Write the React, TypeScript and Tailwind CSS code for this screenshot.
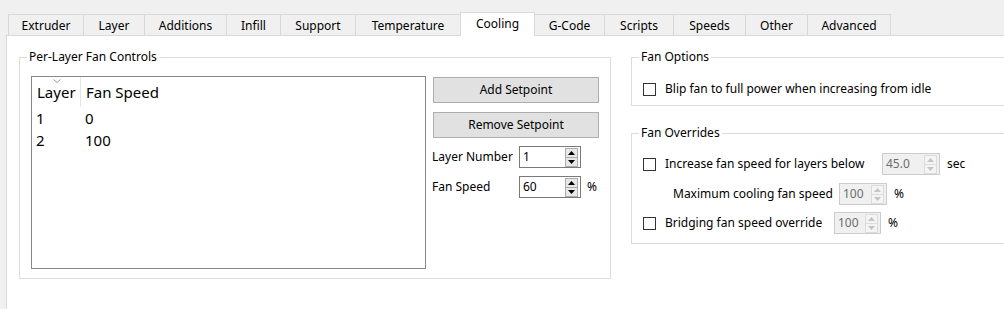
import React from "react";

const tabs: { label: string; w: string; active?: boolean }[] = [
  { label: "Extruder", w: "w-[76px]" },
  { label: "Layer", w: "w-[62px]" },
  { label: "Additions", w: "w-[83px]" },
  { label: "Infill", w: "w-[55px]" },
  { label: "Support", w: "w-[76px]" },
  { label: "Temperature", w: "w-[106px]" },
  { label: "Cooling", w: "w-[75px]", active: true },
  { label: "G-Code", w: "w-[71px]" },
  { label: "Scripts", w: "w-[70px]" },
  { label: "Speeds", w: "w-[73px]" },
  { label: "Other", w: "w-[63px]" },
  { label: "Advanced", w: "w-[84px]" },
];

function Arrows({ disabled }: { disabled?: boolean }) {
  const c = disabled ? "#c4c4c4" : "#000";
  return (
    <div className={`mr-[2px] flex h-[19px] w-[13px] flex-col border ${disabled ? "border-[#dcdcdc] bg-[#f4f4f4]" : "border-[#adadad] bg-[#e8e8e8]"}`}>
      <div className="flex flex-1 items-center justify-center">
        <svg width="7" height="4" viewBox="0 0 7 4"><path d="M3.5 0 L7 4 L0 4 Z" fill={c} /></svg>
      </div>
      <div className={`h-px ${disabled ? "bg-[#dcdcdc]" : "bg-[#adadad]"}`} />
      <div className="flex flex-1 items-center justify-center">
        <svg width="7" height="4" viewBox="0 0 7 4"><path d="M0 0 L7 0 L3.5 4 Z" fill={c} /></svg>
      </div>
    </div>
  );
}

function Spin({ value, w, disabled }: { value: string; w: string; disabled?: boolean }) {
  return (
    <div className={`flex h-[22px] ${w} items-center border ${disabled ? "border-[#cccccc] bg-[#f0f0f0] text-[#6d6d6d]" : "border-[#7a7a7a] bg-white text-black"}`}>
      <span className="flex-1 pl-[3px]">{value}</span>
      <Arrows disabled={disabled} />
    </div>
  );
}

function Check() {
  return <div className="h-[13px] w-[13px] shrink-0 border border-[#333333] bg-white" />;
}

function Group({ title, className, children }: { title: string; className: string; children: React.ReactNode }) {
  return (
    <div className={`relative border border-[#dcdcdc] ${className}`}>
      <span className="absolute left-[7px] -top-[9px] bg-white px-[2px] leading-[16px]">{title}</span>
      {children}
    </div>
  );
}

export default function App() {
  return (
    <div className="h-[309px] w-[1004px] overflow-hidden bg-[#f0f0f0] font-['Segoe_UI','Noto_Sans',sans-serif] text-[12px] text-black">
      {/* Tabs */}
      <div className="flex h-[35px] items-end pl-[8px]">
        {tabs.map((t) => (
          <div
            key={t.label}
            className={`-ml-px flex shrink-0 items-center justify-center border border-b-0 border-[#d9d9d9] first:ml-0 ${t.w} ${
              t.active ? "relative z-10 -mb-px h-[24px] bg-white pb-px" : "h-[21px] bg-[#f0f0f0] pt-px"
            }`}
          >
            {t.label}
          </div>
        ))}
      </div>

      {/* Pane */}
      <div className="ml-[6px] flex h-[274px] gap-[20px] border-l border-t border-[#d9d9d9] bg-white pl-[12px] pt-[21px]">
        <Group title="Per-Layer Fan Controls" className="h-[222px] w-[592px] shrink-0">
          <div className="flex pl-[11px] pt-[18px]">
            <div className="h-[193px] w-[395px] border border-[#828790] text-[15px]">
              <div className="flex h-[30px]">
                <div className="relative w-[49px] border-r border-[#e5e5e5] pl-[5px] pt-[5px] leading-[20px]">
                  <svg className="absolute left-[21px] top-[2px]" width="8" height="4" viewBox="0 0 8 4">
                    <path d="M0.5 0.5 L4 3.5 L7.5 0.5" stroke="#9a9a9a" fill="none" />
                  </svg>
                  Layer
                </div>
                <div className="pl-[5px] pt-[5px] leading-[20px]">Fan Speed</div>
              </div>
              {[["1", "0"], ["2", "100"]].map(([l, s]) => (
                <div key={l} className="flex h-[22px] leading-[22px]">
                  <div className="w-[49px] pl-[4px]">{l}</div>
                  <div className="pl-[4px]">{s}</div>
                </div>
              ))}
            </div>
            <div className="ml-[7px] mt-px flex flex-col">
              <button className="h-[26px] w-[166px] border border-[#adadad] bg-[#e1e1e1]">Add Setpoint</button>
              <button className="mt-[9px] h-[26px] w-[166px] border border-[#adadad] bg-[#e1e1e1]">Remove Setpoint</button>
              <div className="mt-[8px] -ml-px flex items-center">
                <span className="w-[87px]">Layer Number</span>
                <Spin value="1" w="w-[62px]" />
              </div>
              <div className="mt-[8px] -ml-px flex items-center">
                <span className="w-[87px]">Fan Speed</span>
                <Spin value="60" w="w-[62px]" />
                <span className="ml-[6px]">%</span>
              </div>
            </div>
          </div>
        </Group>

        <div className="flex w-[420px] shrink-0 flex-col">
          <Group title="Fan Options" className="h-[49px]">
            <div className="flex items-center pl-[11px] pt-[22px]">
              <Check />
              <span className="ml-[9px]">Blip fan to full power when increasing from idle</span>
            </div>
          </Group>
          <Group title="Fan Overrides" className="mt-[27px] h-[111px]">
            <div className="flex flex-col pt-[19px]">
              <div className="flex h-[22px] items-center pl-[11px]">
                <Check />
                <span className="ml-[9px] w-[217px]">Increase fan speed for layers below</span>
                <Spin value="45.0" w="w-[58px]" disabled />
                <span className="ml-[7px]">sec</span>
              </div>
              <div className="mt-[8px] flex h-[22px] items-center pl-[41px]">
                <span className="w-[166px]">Maximum cooling fan speed</span>
                <Spin value="100" w="w-[48px]" disabled />
                <span className="ml-[7px]">%</span>
              </div>
              <div className="mt-[7px] flex h-[22px] items-center pl-[11px]">
                <Check />
                <span className="ml-[9px] w-[169px]">Bridging fan speed override</span>
                <Spin value="100" w="w-[47px]" disabled />
                <span className="ml-[7px]">%</span>
              </div>
            </div>
          </Group>
        </div>
      </div>
    </div>
  );
}
